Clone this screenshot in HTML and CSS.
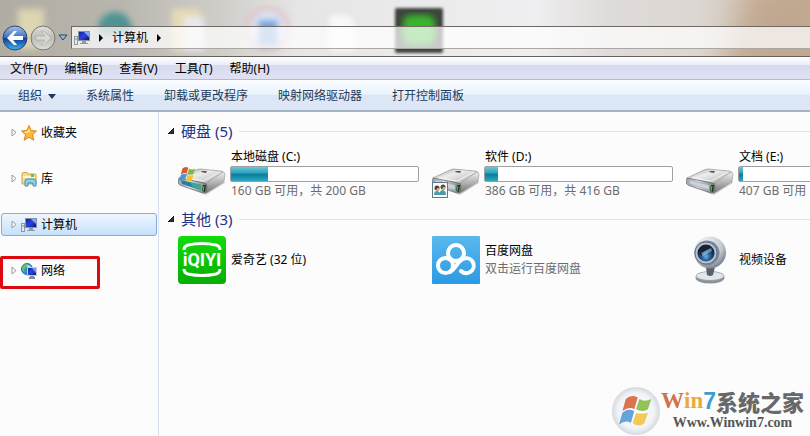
FILE: index.html
```
<!DOCTYPE html>
<html lang="zh-CN">

<head>
 <meta charset="UTF-8">
 <meta name="viewport" content="width=device-width, initial-scale=1.0">
 <title>计算机</title>
 <link rel="stylesheet" href="styles.css">
</head>

<body>
 <!-- shared icons -->
 <svg class="defs" width="0" height="0">
  <defs>
   <linearGradient id="driveTop" x1="0" y1="0" x2="1" y2="1">
    <stop offset="0" stop-color="#999" /><stop offset=".4" stop-color="#ededed" /><stop offset="1" stop-color="#aaa" />
   </linearGradient>
   <linearGradient id="driveSide" x1="0" y1="0" x2="0" y2="1">
    <stop offset="0" stop-color="#eee" /><stop offset=".5" stop-color="#b5b5b5" /><stop offset="1" stop-color="#777" />
   </linearGradient>
   <linearGradient id="driveFront" x1="0" y1="0" x2="1" y2="0">
    <stop offset="0" stop-color="#9aa2aa" /><stop offset=".4" stop-color="#dde3ea" /><stop offset="1" stop-color="#777" />
   </linearGradient>
   <linearGradient id="screen" x1="0" y1="0" x2="1" y2="1">
    <stop offset="0" stop-color="#1420a0" /><stop offset=".5" stop-color="#2a46d8" /><stop offset="1" stop-color="#0a1478" />
   </linearGradient>
   <symbol id="drive" viewBox="0 0 48 48">
    <path d="M3 36 L28 45 L47 33 L46 30 Z" fill="#000" opacity=".16" />
    <path d="M1 28 L18 20 Q20 19 22 19 L43 21 Q46 21 45 23 L29 33 Q27 34 25 33 Z" fill="url(#driveTop)" stroke="#888" stroke-width=".6" />
    <path d="M28 33 L45 22 Q47 22 47 25 L46 31 Q46 32 44 33 L30 42 Q28 43 27 42 Z" fill="url(#driveSide)" stroke="#888" stroke-width=".5" />
    <path d="M1 28 L26 33 Q29 33 29 36 L28 43 L25 43 L2 35 Q0 34 0 32 Z" fill="url(#driveFront)" stroke="#666" stroke-width=".7" />
    <path d="M3 30 L23 35 L23 40 L4 34 Z" fill="#cbd3dc" stroke="#939aa2" stroke-width=".5" />
    <path d="M25 35 L28 35 L27 42 L24 41 Z" fill="#18351d" />
    <path d="M26 36 L25 41" stroke="#58c85c" />
    <path d="M24 21 L29 21 L28 23 L23 22 Z" fill="#555" />
    <path d="M7 28 L25 31 L42 22" fill="none" stroke="#fff" opacity=".7" />
   </symbol>
   <symbol id="flag" viewBox="0 0 20 20">
    <path d="M4 3 Q7 0 11 2 L9 9 Q6 7 2 10 Z" fill="#d95d31" />
    <path d="M12 3 Q15 5 19 3 L17 9 Q14 11 10 9 Z" fill="#82b93b" />
    <path d="M2 11 Q5 8 9 10 L7 17 Q4 15 0 18 Z" fill="#4b97d6" />
    <path d="M10 11 Q13 12 17 11 L15 17 Q12 20 8 17 Z" fill="#f2c23c" />
   </symbol>
   <symbol id="computer" viewBox="0 0 16 16">
    <rect x="0.5" y="6.5" width="3" height="8" fill="#e5e8ec" stroke="#8f98a3" />
    <path d="M1 9h2" stroke="#6ab04a" />
    <rect x="4.500" y="1.500" width="11" height="9" fill="#dfe3ea" stroke="#8a93a5" />
    <rect x="5" y="2" width="10" height="8" fill="url(#screen)" />
    <path d="M10 2h5v5Z" fill="#8ba5f1" />
    <path d="M8 11h4v2h2v1H6v-1h2Z" fill="#8e98a5" />
   </symbol>
   <symbol id="expand" viewBox="0 0 6 9">
    <path d="M1 1 L5 4.500 L1 8 Z" fill="#fff" stroke="#9a9a9a" />
   </symbol>
  </defs>
 </svg>

 <div class="window">
  <header class="glass">
   <!-- desktop icons behind the glass -->
   <svg class="desktop" width="810" height="56" aria-hidden="true">
    <defs>
     <filter id="soft"><feGaussianBlur stdDeviation="3" /></filter>
     <filter id="edge"><feGaussianBlur stdDeviation="1.500" /></filter>
     <filter id="haze" x="-1" width="3"><feGaussianBlur stdDeviation="16" /></filter>
    </defs>
    <path d="M750 -20H840V80H720Z" fill="#c1a78f" filter="url(#haze)" />
    <g filter="url(#soft)">
     <rect x="18" y="9" width="26" height="40" fill="#ddd5b3" />
     <circle cx="115" cy="29" r="17" fill="#4d9494" />
     <path d="M92 36h46v16H92z" fill="#b7b7c4" />
     <rect x="172" y="9" width="28" height="42" fill="#e7dab6" />
     <rect x="184" y="17" width="20" height="34" fill="#e8e8ee" />
     <circle cx="268" cy="29" r="20" fill="#dce6f5" stroke="#e2aeb2" stroke-width="3" />
     <path d="M258 20h20v26h-20z" fill="#6fa3dc" />
     <path d="M327 13h22l8 9v31h-30z" fill="#f8f8f8" stroke="#bbb" />
    </g>
    <rect x="395" y="8" width="48" height="45" rx="2" fill="#3c443c" filter="url(#edge)" />
    <rect x="403" y="15" width="32" height="30" rx="8" fill="#37b62c" filter="url(#soft)" />
   </svg>
   <button class="round" aria-label="后退">
    <svg width="26" height="26" viewBox="0 0 26 26">
     <defs>
      <linearGradient id="back" x1="0" y1="0" x2="0" y2="1">
       <stop offset="0" stop-color="#a9c4e8" /><stop offset=".48" stop-color="#3a6fbe" /><stop offset=".52" stop-color="#0e3f98" /><stop offset="1" stop-color="#3fb4f0" />
      </linearGradient>
     </defs>
     <circle cx="13" cy="13" r="12" fill="url(#back)" stroke="#2c4470" />
     <path d="M5 13 L12 6 L15 6 L11 11 H21 V15 H11 L15 20 H12 Z" fill="#fff" />
    </svg>
   </button>
   <button class="round" aria-label="前进">
    <svg width="26" height="26" viewBox="0 0 26 26">
     <defs>
      <linearGradient id="fwd" x1="0" y1="0" x2="0" y2="1">
       <stop offset="0" stop-color="#e0e0dc" /><stop offset=".5" stop-color="#bcbcb6" /><stop offset="1" stop-color="#deded8" />
      </linearGradient>
     </defs>
     <circle cx="13" cy="13" r="12" fill="url(#fwd)" stroke="#777" />
     <path d="M21 13 L14 6 L11 6 L15 11 H6 V15 H15 L11 20 H14 Z" fill="#d9d9d4" stroke="#aeaea8" stroke-width=".7" />
    </svg>
   </button>
   <button class="recent" aria-label="最近浏览">
    <svg width="10" height="7" viewBox="0 0 10 7"><path d="M1 1H9L5 6Z" fill="#8bbbe0" stroke="#27475f" /></svg>
   </button>
   <div class="address">
    <svg width="16" height="16"><use href="#computer" /></svg>
    <svg width="4" height="8"><path d="M0 0L4 4L0 8Z" /></svg>
    <span>计算机</span>
    <svg width="4" height="8"><path d="M0 0L4 4L0 8Z" /></svg>
   </div>
  </header>

  <nav class="menu">
   <button>文件(F)</button>
   <button>编辑(E)</button>
   <button>查看(V)</button>
   <button>工具(T)</button>
   <button>帮助(H)</button>
  </nav>

  <div class="toolbar">
   <button>组织<svg width="8" height="5"><path d="M0 0H8L4 5Z" fill="#1e395b" /></svg></button>
   <button>系统属性</button>
   <button>卸载或更改程序</button>
   <button>映射网络驱动器</button>
   <button>打开控制面板</button>
  </div>

  <div class="body">
   <aside class="tree">
    <button class="node">
     <svg class="arrow"><use href="#expand" /></svg>
     <svg width="16" height="16" viewBox="0 0 16 16"><path d="M8 0.500 L10.200 5.500 L15.500 6 L11.500 9.700 L12.800 15.200 L8 12.300 L3.200 15.200 L4.500 9.700 L0.500 6 L5.800 5.500 Z" fill="#fcb93a" stroke="#d98324" /><path d="M8 3 L9 7 L5 8 L3 7 L7 6 Z" fill="#ffe9a0" /></svg>
     收藏夹
    </button>
    <button class="node">
     <svg class="arrow"><use href="#expand" /></svg>
     <svg width="16" height="16" viewBox="0 0 16 16"><path d="M1 3 Q1 1.500 3 1.500 H6 L7 3 H14 Q15 3 15 4 V13 H1 Z" fill="#f3dd88" stroke="#c8a84c" /><path d="M2 5H14V7H2z" fill="#fff6cb" /><path d="M10 3h3v3h-3z" fill="#7ab45d" /><path d="M4 15 V10 Q4 8 6 8 H12 Q15 8 15 10 V15 H12 V12 H7 V15 Z" fill="#8ed0f0" stroke="#3e8fc0" /></svg>
     库
    </button>
    <button class="node selected">
     <svg class="arrow"><use href="#expand" /></svg>
     <svg width="16" height="16"><use href="#computer" /></svg>
     计算机
    </button>
    <button class="node marked">
     <svg class="arrow"><use href="#expand" /></svg>
     <svg width="16" height="16" viewBox="0 0 16 16"><circle cx="6" cy="6" r="5.500" fill="#2e93c9" stroke="#257597" /><path d="M2 3 Q5 0 7 1 L6 4 L3 6 L4 9 L2 8 Q0 5 2 3Z" fill="#68c36b" /><path d="M6 2Q9 2 10 4L7 5Z" fill="#c3ecf4" /><rect x="6.500" y="4.500" width="9" height="8" fill="url(#screen)" stroke="#c3cbd8" /><path d="M11 5h4v5Z" fill="#7d97ee" /><path d="M9 13h4v1h1v2H8v-2h1z" fill="#7e8ba0" /></svg>
     网络
    </button>
   </aside>

   <main class="content">
    <section>
     <h2><svg width="6" height="6"><path d="M6 0V6H0Z" fill="#333" stroke="#111" /></svg>硬盘 (5)</h2>
     <div class="tiles">
      <div class="tile">
       <svg class="icon" viewBox="0 0 48 48"><use href="#drive" width="48" height="48" /><path d="M3 30 L23 35 L23 40 L4 34 Z" fill="#237f9b" /><path d="M12 32 L23 35 V40 L15 37Z" fill="#3aa994" /><use href="#flag" x="1" y="16" width="17" height="17" /></svg>
       <div class="info">
        <span class="name">本地磁盘 (C:)</span>
        <div class="bar"><div class="used" style="width: 20%"></div></div>
        <span class="sub">160 GB 可用，共 200 GB</span>
       </div>
      </div>
      <div class="tile">
       <svg class="icon" viewBox="0 0 48 48"><use href="#drive" width="48" height="48" /><rect x="0.500" y="32.500" width="15" height="15" fill="#f7fbfc" stroke="#627b88" /><circle cx="5" cy="38" r="2.500" fill="#4b4234" /><circle cx="11" cy="37" r="2.500" fill="#5b4b35" /><path d="M5 38h2v3H4zM11 37h2v3h-3z" fill="#d5ad7b" /><path d="M2 45Q2 41 5 41Q7 41 8 43Q8 40 11 40Q14 41 14 45Z" fill="#4d9aab" /></svg>
       <div class="info">
        <span class="name">软件 (D:)</span>
        <div class="bar"><div class="used" style="width: 7%"></div></div>
        <span class="sub">386 GB 可用，共 416 GB</span>
       </div>
      </div>
      <div class="tile">
       <svg class="icon" viewBox="0 0 48 48"><use href="#drive" width="48" height="48" /></svg>
       <div class="info">
        <span class="name">文档 (E:)</span>
        <div class="bar"><div class="used" style="width: 2%"></div></div>
        <span class="sub">407 GB 可用</span>
       </div>
      </div>
     </div>
    </section>

    <section>
     <h2><svg width="6" height="6"><path d="M6 0V6H0Z" fill="#333" stroke="#111" /></svg>其他 (3)</h2>
     <div class="tiles">
      <div class="tile">
       <svg class="icon" viewBox="0 0 48 48">
        <defs><linearGradient id="qiyi" x1="0" y1="0" x2="0" y2="1"><stop offset="0" stop-color="#12dc0a" /><stop offset="1" stop-color="#06ad06" /></linearGradient></defs>
        <rect width="48" height="48" rx="4" fill="url(#qiyi)" />
        <path d="M6 14 Q6 10 10 9 Q24 6 38 9 Q42 10 42 14" fill="none" stroke="#fff" stroke-width="3" />
        <path d="M6 33 Q6 37 10 38 Q24 41 38 38 Q42 37 42 33" fill="none" stroke="#fff" stroke-width="3" />
        <text class="qiyi" x="24" y="30" text-anchor="middle">iQIYI</text>
       </svg>
       <div class="info"><span class="name">爱奇艺 (32 位)</span></div>
      </div>
      <div class="tile">
       <svg class="icon" viewBox="0 0 48 48">
        <defs><linearGradient id="pan" x1="0" y1="0" x2="0" y2="1"><stop offset="0" stop-color="#5ab8ee" /><stop offset="1" stop-color="#2b9ae4" /></linearGradient></defs>
        <rect width="48" height="48" rx="1" fill="url(#pan)" />
        <g fill="none" stroke="#fff" stroke-width="4">
         <circle cx="24" cy="17" r="8" />
         <circle cx="13.500" cy="29.500" r="7.500" />
         <path d="M18 36 Q21 34 24 30 Q28 24 32 22.500 A7.500 7.500 0 1 1 29 35" stroke-linecap="round" />
        </g>
       </svg>
       <div class="info"><span class="name">百度网盘</span><span class="sub">双击运行百度网盘</span></div>
      </div>
      <div class="tile">
       <svg class="icon" viewBox="0 0 48 48">
        <defs>
         <radialGradient id="shell" cx=".35" cy=".25" r=".75"><stop offset="0" stop-color="#f6f8fa" /><stop offset=".7" stop-color="#c3c9d1" /><stop offset="1" stop-color="#808997" /></radialGradient>
         <radialGradient id="lens" cx=".5" cy=".7"><stop offset="0" stop-color="#69b5e8" /><stop offset=".5" stop-color="#285c93" /><stop offset="1" stop-color="#13283f" /></radialGradient>
        </defs>
        <ellipse cx="24" cy="42" rx="14.500" ry="5.500" fill="#8b929c" />
        <ellipse cx="24" cy="40" rx="14" ry="4.500" fill="#e2e5e9" stroke="#8b939e" stroke-width=".7" />
        <path d="M20 31h9l-2 8q-3 2-6 0z" fill="#59616d" />
        <circle cx="24" cy="16.500" r="16" fill="url(#shell)" />
        <circle cx="21" cy="17" r="12.500" fill="#7b8798" />
        <circle cx="20" cy="17" r="11" fill="#b7c3d4" stroke="#667386" />
        <circle cx="20" cy="17" r="8.500" fill="url(#lens)" />
        <path d="M13 15Q17 8 25 11Q20 13 15 20Z" fill="#182230" />
        <path d="M15 17L25 12L26 15L17 20Z" fill="#b8dcf4" opacity=".5" />
       </svg>
       <div class="info"><span class="name">视频设备</span></div>
      </div>
     </div>
    </section>
   </main>
  </div>

  <div class="watermark">
   <svg width="50" height="50" viewBox="0 0 50 50">
    <defs><radialGradient id="orb"><stop offset="0" stop-color="#fff" /><stop offset=".75" stop-color="#f1f4f7" /><stop offset="1" stop-color="#d3d9df" /></radialGradient></defs>
    <circle cx="25" cy="25" r="24" fill="url(#orb)" />
    <use href="#flag" x="8" y="8" width="34" height="34" opacity=".85" />
   </svg>
   <div>
    <p class="brand"><span class="w">W</span><span class="in">in</span><span class="seven">7</span><span class="zh">系统之家</span></p>
    <p class="site">Www.Winwin7.com</p>
   </div>
  </div>
 </div>
</body>

</html>
```
FILE: styles.css
```
* {
 box-sizing: border-box;
}

body {
 margin: 0;
 font: 12px/18px "Noto Sans", "Noto Sans CJK SC", sans-serif;
 color: #000;
 background-color: #fcfcfc;
}

button {
 margin: 0;
 padding: 0;
 border: 0;
 background: none;
 font: inherit;
 color: inherit;
}

svg {
 display: block;
 flex: none;
}

.defs {
 position: absolute;
}

.window {
 position: relative;
 display: flex;
 flex-direction: column;
 min-height: 100vh;
 overflow: hidden;
}

/* title area */
.glass {
 position: relative;
 display: flex;
 align-items: center;
 gap: 2px;
 height: 57px;
 padding: 19px 0 0 2px;
 overflow: hidden;
 border-bottom: 1px solid #665f5b;
 background: linear-gradient(90deg, #b0aca2 0, #b9b6ae 15%, #cfcdc8 27%, #e6e6e6 37%, #efeff1 66%, #dfdbd9 75%, #dcd7d2 86%, #cabaa9 100%);
}

.desktop {
 position: absolute;
 left: 0;
 top: 0;
}

.round,
.recent,
.address {
 position: relative;
}

.recent {
 margin: 0 1px 0 0;
}

.address {
 flex: 1;
 display: flex;
 align-items: center;
 gap: 9px;
 height: 23px;
 padding-left: 2px;
 border: 1px solid #6e6964;
 border-right: 0;
 border-bottom-color: #aaa7a2;
 background-color: rgba(255, 255, 255, .72);
}

/* menu and toolbar */
.menu {
 display: flex;
 gap: 1px;
 height: 23px;
 padding: 2px 2px 0;
 border-bottom: 1px solid #b6bccc;
 background: linear-gradient(#fff 0, #e9edf6 35%, #d6daec 36%, #e0e2f4 100%);
}

.menu button {
 padding: 0 8px;
}

.toolbar {
 display: flex;
 height: 32px;
 padding: 2px 3px 0;
 border-bottom: 2px solid #a5b3c6;
 background: linear-gradient(#fbfdff 0, #e8f3fd 48%, #dce6f4 50%, #dde7f5 100%);
 color: #1e395b;
}

.toolbar button {
 display: flex;
 align-items: center;
 gap: 6px;
 padding: 0 15px;
}

.body {
 flex: 1;
 display: flex;
}

/* left tree */
.tree {
 flex: none;
 display: flex;
 flex-direction: column;
 gap: 23px;
 width: 159px;
 padding: 9px 1px;
 border-right: 1px solid #d6e0ee;
}

.node {
 position: relative;
 display: flex;
 align-items: center;
 gap: 4px;
 height: 23px;
 padding-left: 9px;
 border: 1px solid transparent;
 border-radius: 3px;
}

.arrow {
 width: 6px;
 height: 9px;
}

.selected {
 border-color: #84acdd;
 background: linear-gradient(#eff6fe, #c6e0fb);
}

.marked::after {
 content: "";
 position: absolute;
 box-sizing: border-box;
 left: -2px;
 top: -4px;
 width: 100px;
 height: 33px;
 border: 3px solid #dc0a0e;
 border-radius: 2px;
}

/* right pane */
.content {
 flex: 1;
 min-width: 0;
 padding: 9px 0 0 9px;
 overflow: hidden;
}

h2 {
 display: flex;
 align-items: center;
 gap: 7px;
 margin: 0;
 font-size: 15px;
 line-height: 20px;
 font-weight: normal;
 color: #1e3287;
}

h2::after {
 content: "";
 flex: 1;
 height: 1px;
 background-color: #e0e2e6;
}

.tiles {
 display: grid;
 grid-template-columns: repeat(3, 254px);
 padding: 7px 0 9px 10px;
}

.tile {
 display: flex;
 align-items: center;
 gap: 4px;
 min-height: 48px;
}

.icon {
 width: 48px;
 height: 48px;
}

.info {
 display: flex;
 flex-direction: column;
}

.name,
.sub {
 padding-left: 1px;
}

.sub {
 color: #6d6d6d;
}

.bar {
 width: 189px;
 height: 16px;
 border: 1px solid #a0a0a0;
 border-radius: 2px;
 background-color: #fff;
}

.used {
 height: 100%;
 background: linear-gradient(#6bc8dc 0, #2ba5c0 40%, #0d7c99 55%, #2ba9c3 100%);
}

.qiyi {
 font: bold 18px Roboto, sans-serif;
 fill: #fff;
}

.watermark {
 position: absolute;
 right: 6px;
 bottom: 0;
 display: flex;
 align-items: center;
}

.watermark p {
 margin: 0;
}

.brand {
 display: flex;
 align-items: center;
 font: bold 23px/22px "Liberation Serif", serif;
}

.w {
 color: #d2714f;
}

.in {
 color: #eda83b;
}

.seven {
 font-family: "Liberation Sans", sans-serif;
 color: #3a9fd0;
}

.zh {
 font: 900 22px/22px "Noto Sans CJK SC", sans-serif;
 color: #686868;
}

.watermark .site {
 margin-top: 2px;
 font: bold 14px/18px "Liberation Serif", serif;
 color: #555;
 text-align: center;
}
```
